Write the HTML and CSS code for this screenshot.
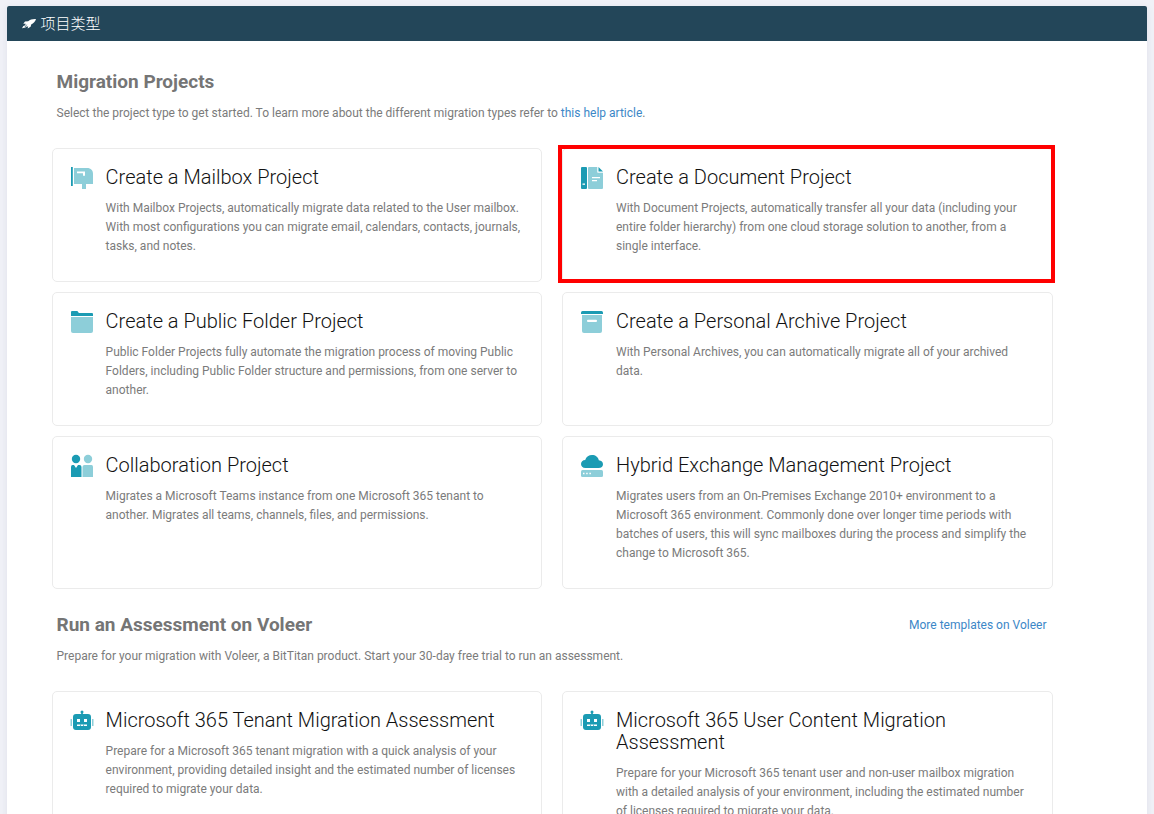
FILE: index.html
```html
<!DOCTYPE html>
<html lang="zh-CN">
<head>
<meta charset="utf-8">
<title>项目类型</title>
<link rel="stylesheet" href="styles.css">
</head>
<body>
<main class="panel">
  <header class="panel-header">
    <svg class="rocket" viewBox="0 0 14 12"><path fill="#fff" d="M14 1C10.500 .8 8 1.600 6.200 3.300L3 3.500 1.300 5.800l2.500-.1L2.800 7.500l-1.500.4L0 10.200l3.300-.8 1.500-.9 1.400-.1-.6 2.200L8.600 8.800l.6-2.200C11.500 5.200 13.400 3.400 14 1z"/><path d="M3 9l1.700-2.300" fill="none" stroke="#234659" stroke-width=".7"/></svg>
    <span>项目类型</span>
  </header>
  <div class="content">
    <div class="section-head"><h2>Migration Projects</h2></div>
    <p class="lead lead-first">Select the project type to get started. To learn more about the different migration types refer to <a href="#">this help article</a>.</p>
    <section class="grid">
      <article class="card">
        <svg class="icon" viewBox="0 0 24 24"><path class="dark" d="M1 1h1.800v19H1z"/><path class="light" d="M4 2h13c4 0 6 2.500 6 6v10h-7v5h-4v-5H4z"/><path fill="#fff" d="M7 5.500h8v4.300h-2V7.300H7z"/></svg>
        <div><h3>Create a Mailbox Project</h3><p>With Mailbox Projects, automatically migrate data related to the User mailbox.<br>With most configurations you can migrate email, calendars, contacts, journals,<br>tasks, and notes.</p></div>
      </article>
      <article class="card marked">
        <svg class="icon" viewBox="0 0 24 24"><path class="dark" d="M2 1h4q1 0 1 1v20q0 1-1 1H2q-1 0-1-1V2q0-1 1-1z"/><path fill="#fff" d="M2.500 17.500h2.500v1.300H2.500z"/><path class="light" d="M9 1h8.500v5.500H23V22q0 1-1 1H9q-1 0-1-1V2q0-1 1-1z"/><path fill="#fff" d="M17.500 1H23v5.500h-5.500z"/><path class="dark" d="M18.500 1L23 5.500h-4.500z"/><path fill="#fff" d="M12 11h8v1.300h-8zm0 3h5v1.300h-5z"/></svg>
        <div><h3>Create a Document Project</h3><p>With Document Projects, automatically transfer all your data (including your<br>entire folder hierarchy) from one cloud storage solution to another, from a<br>single interface.</p></div>
      </article>
      <article class="card">
        <svg class="icon" viewBox="0 0 24 24"><path class="dark" d="M1 6V2q0-1 1-1h5q1 0 1 1l1 1h13q1 0 1 1v2z"/><path class="light" d="M1 7h22v14q0 2-2 2H3q-2 0-2-2z"/></svg>
        <div><h3>Create a Public Folder Project</h3><p>Public Folder Projects fully automate the migration process of moving Public<br>Folders, including Public Folder structure and permissions, from one server to<br>another.</p></div>
      </article>
      <article class="card">
        <svg class="icon" viewBox="0 0 24 24"><path class="dark" d="M1 4V2.500Q1 1 2.500 1h19Q23 1 23 2.500V4z"/><path class="light" d="M2 5h20v16q0 2-2 2H4q-2 0-2-2z"/><rect x="7" y="9.800" width="10" height="2.200" rx="1" fill="#fff"/></svg>
        <div><h3>Create a Personal Archive Project</h3><p>With Personal Archives, you can automatically migrate all of your archived<br>data.</p></div>
      </article>
      <article class="card">
        <svg class="icon" viewBox="0 0 24 24"><circle class="dark" cx="6" cy="5" r="4.200"/><path class="dark" d="M2.500 11H4l2 3 2-3h1.500q2 0 2 2v10H1V13q0-2 1.500-2z"/><circle class="light" cx="18" cy="5" r="4.200"/><path class="light" d="M14.500 11h7q1.500 0 1.500 2v10H12.500V13q0-2 2-2z"/></svg>
        <div><h3>Collaboration Project</h3><p>Migrates a Microsoft Teams instance from one Microsoft 365 tenant to<br>another. Migrates all teams, channels, files, and permissions.</p></div>
      </article>
      <article class="card">
        <svg class="icon" viewBox="0 0 24 24"><path class="dark" d="M5.500 14C2.500 14 1 12.300 1 10c0-2.200 1.700-4 4.200-4C6.200 2.800 9 1 12 1c3.500 0 6.200 2 6.800 5.300C21.500 6.500 23 8 23 10.200S21.500 14 18.500 14z"/><path class="light" d="M2.500 16h19q1.500 0 1.500 1.500v4q0 1.500-1.500 1.500h-19Q1 23 1 21.500v-4Q1 16 2.500 16z"/><path fill="#fff" d="M3 18.800h1.500v1.500H3zm3.200 0h1.500v1.500H6.200zm3.200 0h1.500v1.500H9.400z"/></svg>
        <div><h3>Hybrid Exchange Management Project</h3><p>Migrates users from an On-Premises Exchange 2010+ environment to a<br>Microsoft 365 environment. Commonly done over longer time periods with<br>batches of users, this will sync mailboxes during the process and simplify the<br>change to Microsoft 365.</p></div>
      </article>
    </section>
    <div class="section-head section-second"><h2>Run an Assessment on Voleer</h2><a href="#">More templates on Voleer</a></div>
    <p class="lead">Prepare for your migration with Voleer, a BitTitan product. Start your 30-day free trial to run an assessment.</p>
    <section class="grid">
      <article class="card">
        <svg class="icon" viewBox="0 0 24 24"><path class="light" d="M.5 10H2v7H.5zM22 10h1.500v7H22z"/><path class="dark" d="M11.200 5V2h1.600v3H18q3 0 3 3v10q0 3-3 3H6q-3 0-3-3V8q0-3 3-3z"/><circle class="dark" cx="12" cy="3" r="1.500"/><path fill="#fff" d="M7 10h3v3H7zm7 0h3v3h-3zM7 15.500h10V17H7z"/><path class="dark" d="M10 15.500h.7V17H10zm3.300 0h.7V17h-.7z"/></svg>
        <div><h3>Microsoft 365 Tenant Migration Assessment</h3><p>Prepare for a Microsoft 365 tenant migration with a quick analysis of your<br>environment, providing detailed insight and the estimated number of licenses<br>required to migrate your data.</p></div>
      </article>
      <article class="card">
        <svg class="icon" viewBox="0 0 24 24"><path class="light" d="M.5 10H2v7H.5zM22 10h1.500v7H22z"/><path class="dark" d="M11.200 5V2h1.600v3H18q3 0 3 3v10q0 3-3 3H6q-3 0-3-3V8q0-3 3-3z"/><circle class="dark" cx="12" cy="3" r="1.500"/><path fill="#fff" d="M7 10h3v3H7zm7 0h3v3h-3zM7 15.500h10V17H7z"/><path class="dark" d="M10 15.500h.7V17H10zm3.300 0h.7V17h-.7z"/></svg>
        <div><h3>Microsoft 365 User Content Migration<br>Assessment</h3><p>Prepare for your Microsoft 365 tenant user and non-user mailbox migration<br>with a detailed analysis of your environment, including the estimated number<br>of licenses required to migrate your data.</p></div>
      </article>
    </section>
  </div>
</main>
</body>
</html>
```
FILE: styles.css
```css
* { box-sizing: border-box; }
html, body { height: 100%; overflow: hidden; }
body {
  margin: 0;
  padding: 6px 7px 0;
  background: #f0f1f7;
  color: #7b7b7b;
  font: 12px/19px Roboto, "Noto Sans CJK SC", sans-serif;
}
h2, h3, p { margin: 0; white-space: nowrap; }
a { color: #3c87c7; text-decoration: none; }
.panel { background: #fff; box-shadow: 0 2px 8px rgba(40, 50, 90, .08); }
.panel-header {
  display: flex;
  align-items: center;
  gap: 4.500px;
  height: 35px;
  padding-left: 15px;
  border-radius: 2px 2px 0 0;
  background: #234659;
  color: #fff;
  font: 300 15px/20px Roboto, "Noto Sans CJK SC", sans-serif;
}
.rocket { width: 14px; height: 12px; }
.content { width: 1046px; padding: 29px 0 0 45px; }
.section-head {
  display: flex;
  align-items: center;
  justify-content: space-between;
  height: 24px;
  padding: 0 6.500px 0 4.500px;
}
.section-second { margin-top: 24px; }
h2 { font-size: 19px; line-height: 24px; font-weight: 700; color: #757575; }
.lead { margin: 10px 0 25px 4.500px; }
.grid { display: grid; grid-template-columns: 490px 491px; gap: 10px 20px; }
.card {
  position: relative;
  display: flex;
  gap: 11.600px;
  padding: 17px 0 25px 17px;
  border: 1px solid #ebebeb;
  border-radius: 5px;
}
.card:nth-child(even) { gap: 12px; }
.marked::after {
  content: "";
  position: absolute;
  inset: -4px -3px -2px -5px;
  border: 4px solid #f00;
}
.icon { flex: none; width: 24px; height: 24px; }
.dark { fill: #1b9bb3; }
.light { fill: #8dced9; }
h3 { margin-bottom: 11px; color: #111; font-size: 20px; line-height: 22px; font-weight: 300; }
```
